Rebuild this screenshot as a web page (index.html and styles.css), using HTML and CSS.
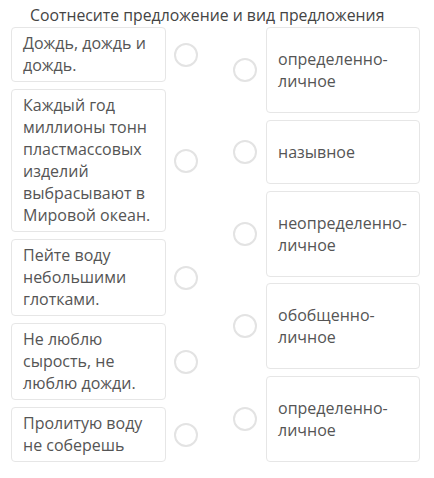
FILE: index.html
```html
<!DOCTYPE html>
<html lang="ru">
<head>
  <meta charset="UTF-8">
  <title>Соотнесите</title>
  <link rel="stylesheet" href="styles.css">
</head>
<body>
  <div class="task">
    <div class="task-title">Соотнесите предложение и вид предложения</div>
    <div class="match">
      <div class="col col-left">
        <div class="row"><div class="card">Дождь, дождь и дождь.</div><span class="dot"></span></div>
        <div class="row"><div class="card">Каждый год миллионы тонн пластмассовых изделий выбрасывают в Мировой океан.</div><span class="dot"></span></div>
        <div class="row"><div class="card">Пейте воду небольшими глотками.</div><span class="dot"></span></div>
        <div class="row"><div class="card">Не люблю сырость, не люблю дожди.</div><span class="dot"></span></div>
        <div class="row"><div class="card">Пролитую воду не соберешь</div><span class="dot"></span></div>
      </div>
      <div class="col col-right">
        <div class="row"><span class="dot"></span><div class="card">определенно-личное</div></div>
        <div class="row"><span class="dot"></span><div class="card">назывное</div></div>
        <div class="row"><span class="dot"></span><div class="card">неопределенно-личное</div></div>
        <div class="row"><span class="dot"></span><div class="card">обобщенно-личное</div></div>
        <div class="row"><span class="dot"></span><div class="card">определенно-личное</div></div>
      </div>
    </div>
  </div>
</body>
</html>
```

FILE: styles.css
```css
body {
  margin: 0;
  background: #fff;
  font-family: "Open Sans", sans-serif;
  color: #555;
}

.task {
  padding: 4px 14px 0 11px;
}

.task-title {
  font-size: 15.8px;
  line-height: 22px;
  color: #444;
  padding-left: 19px;
}

.match {
  display: flex;
  justify-content: space-between;
  margin-top: 1px;
  height: 435px;
}

.col {
  display: flex;
  flex-direction: column;
  justify-content: space-between;
}

.row {
  display: flex;
  align-items: center;
}

.card {
  width: 155px;
  box-sizing: border-box;
  border: 1px solid #e6e6e6;
  border-radius: 4px;
  font-size: 16px;
  line-height: 22px;
  padding: 4px 10px 5px 11px;
}

.col-right .card {
  width: 154px;
  padding: 20px 10px 20px 11px;
}

.dot {
  width: 24px;
  height: 24px;
  box-sizing: border-box;
  border: 2px solid #e3e3e3;
  border-radius: 50%;
  margin-left: 8px;
}

.col-right .dot {
  margin-left: 0;
  margin-right: 9px;
}
```
